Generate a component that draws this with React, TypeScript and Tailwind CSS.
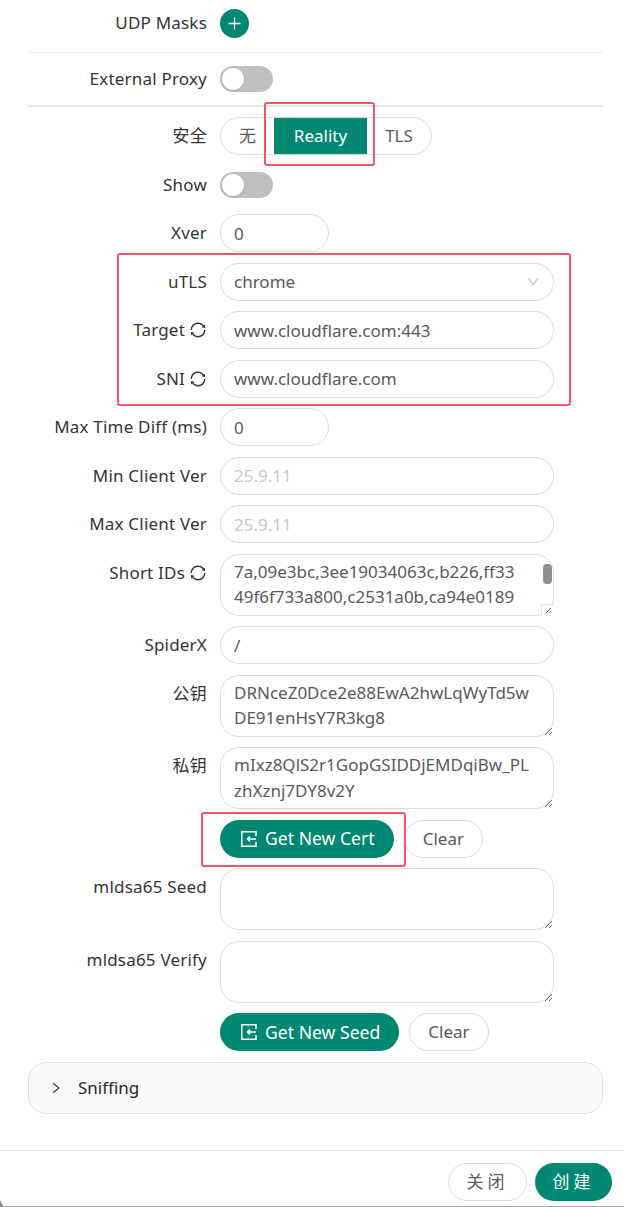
import type { ReactNode } from 'react';
import { AiOutlineDown, AiOutlinePlus, AiOutlineRight, AiOutlineSync } from 'react-icons/ai';

const FONT = '"Noto Sans", "Noto Sans CJK SC", sans-serif';

function Row({ label, sync, children }: { label: string; sync?: boolean; children: ReactNode }) {
  return (
    <div className="flex items-start">
      <div className="w-[207px] h-[38px] flex items-center justify-end gap-[4px] text-[#333333] tracking-[0.2px] whitespace-nowrap">
        <span>{label}</span>
        {sync && <AiOutlineSync size={18} className="text-[#333333]" />}
      </div>
      <div className="ml-[13px] w-[334px] flex items-center min-h-[38px]">{children}</div>
    </div>
  );
}

function Toggle() {
  return (
    <div className="w-[53px] h-[26px] rounded-full bg-[#bfbfbf] p-[2px]">
      <div className="w-[22px] h-[22px] rounded-full bg-white shadow" />
    </div>
  );
}

function TextInput({ value, placeholder, short }: { value?: string; placeholder?: string; short?: boolean }) {
  return (
    <input
      readOnly
      value={value ?? ''}
      placeholder={placeholder}
      className={`${short ? 'w-[109px]' : 'w-full'} h-[38px] px-[13px] rounded-[19px] border border-[#dcdcdc] bg-white text-[#595959] outline-none placeholder:text-[#c8c8c8]`}
    />
  );
}

function Area({ value, scroll }: { value?: string; scroll?: boolean }) {
  return (
    <div className="relative w-full">
      <textarea
        readOnly
        value={value ?? ''}
        className={`block w-full h-[62px] pl-[13px] ${scroll ? 'pr-[30px]' : 'pr-[17px]'} pt-[4px] pb-[5px] rounded-[19px] border border-[#dcdcdc] bg-white text-[#595959] leading-[25.5px] outline-none resize-y overflow-hidden break-all`}
      />
      {scroll && (
        <>
          <div className="absolute right-[2px] top-[10px] w-[9px] h-[20px] rounded-[4px] bg-[#8f8f8f]" />
          <div className="absolute right-0 bottom-0 w-[13px] h-[12px] bg-white border-l border-t border-[#e4e4e4] flex items-center justify-center">
            <svg width="7" height="7" viewBox="0 0 7 7" fill="none" stroke="#777777" strokeWidth="1">
              <path d="M1 6 6 1M4 6 6 4" />
            </svg>
          </div>
        </>
      )}
    </div>
  );
}

function ImportIcon() {
  return (
    <svg width="18" height="18" viewBox="0 0 18 18" fill="none" stroke="currentColor" strokeWidth="1.5">
      <path d="M16 6V1.75H1.75v14.5H16V12" />
      <path d="M16 9H7.5M10 6.5 7.5 9l2.5 2.5" />
    </svg>
  );
}

function CertButtons({ label }: { label: string }) {
  return (
    <div className="flex items-center gap-[10px]">
      <button className="h-[38px] pl-[20px] pr-[19px] rounded-full bg-[#008771] text-white text-[17.6px] flex items-center gap-[7px] whitespace-nowrap">
        <ImportIcon />
        {label}
      </button>
      <button className="h-[38px] px-[18px] rounded-full border border-[#dcdcdc] bg-white text-[#595959]">Clear</button>
    </div>
  );
}

export default function App() {
  return (
    <div
      className="relative w-[624px] h-[1207px] overflow-hidden bg-white text-[17px] flex flex-col"
      style={{ fontFamily: FONT }}
    >
      <div className="pl-[28px] pr-[21px] pt-[4px] flex flex-col">
        <div className="-ml-[28px]">
          <Row label="UDP Masks">
            <button className="w-[29px] h-[29px] rounded-full bg-[#008771] text-white flex items-center justify-center">
              <AiOutlinePlus size={17} />
            </button>
          </Row>
        </div>
        <div className="h-px bg-[#eeeeee] mt-[10px] mb-[7px]" />
        <div className="-ml-[28px]">
          <Row label="External Proxy">
            <Toggle />
          </Row>
        </div>
        <div className="h-[2px] bg-[#e6e6e6] mt-[7px] mb-[10px]" />

        <div className="-ml-[28px] flex flex-col gap-[10.5px]">
          <Row label="安全">
            <div className="flex h-[38px] items-stretch rounded-full border border-[#dcdcdc] text-[#595959]">
              <span className="w-[53px] flex items-center justify-center">无</span>
              <span className="w-[93px] flex items-center justify-center bg-[#008771] text-white">Reality</span>
              <span className="w-[64px] flex items-center justify-center">TLS</span>
            </div>
          </Row>
          <Row label="Show">
            <Toggle />
          </Row>
          <Row label="Xver">
            <TextInput value="0" short />
          </Row>
          <Row label="uTLS">
            <div className="w-full h-[38px] px-[13px] rounded-[19px] border border-[#dcdcdc] bg-white text-[#595959] flex items-center justify-between">
              chrome
              <AiOutlineDown size={14} className="text-[#bdbdbd]" />
            </div>
          </Row>
          <Row label="Target" sync>
            <TextInput value="www.cloudflare.com:443" />
          </Row>
          <Row label="SNI" sync>
            <TextInput value="www.cloudflare.com" />
          </Row>
          <Row label="Max Time Diff (ms)">
            <TextInput value="0" short />
          </Row>
          <Row label="Min Client Ver">
            <TextInput placeholder="25.9.11" />
          </Row>
          <Row label="Max Client Ver">
            <TextInput placeholder="25.9.11" />
          </Row>
          <Row label="Short IDs" sync>
            <Area value="7a,09e3bc,3ee19034063c,b226,ff3349f6f733a800,c2531a0b,ca94e0189" scroll />
          </Row>
          <Row label="SpiderX">
            <TextInput value="/" />
          </Row>
          <Row label="公钥">
            <Area value="DRNceZ0Dce2e88EwA2hwLqWyTd5wDE91enHsY7R3kg8" />
          </Row>
          <Row label="私钥">
            <Area value="mIxz8QlS2r1GopGSIDDjEMDqiBw_PLzhXznj7DY8v2Y" />
          </Row>
          <Row label="">
            <CertButtons label="Get New Cert" />
          </Row>
          <Row label="mldsa65 Seed">
            <Area />
          </Row>
          <Row label="mldsa65 Verify">
            <Area />
          </Row>
          <Row label="">
            <CertButtons label="Get New Seed" />
          </Row>
        </div>

        <div className="mt-[11px] h-[52px] rounded-[18px] border border-[#e0e0e0] bg-[#fafafa] flex items-center pl-[20px] gap-[15px] text-[#262626]">
          <AiOutlineRight size={14} />
          Sniffing
        </div>
      </div>

      <div className="mt-auto border-t border-b border-t-[#e8e8e8] border-b-[#ababab] h-[57px] pt-[12px] pr-[12px] flex justify-end gap-[8px]">
        <button className="w-[79px] h-[38px] rounded-full border border-[#dcdcdc] bg-white text-[#595959] tracking-[4px]">关闭</button>
        <button className="w-[77px] h-[38px] rounded-full bg-[#008771] text-white tracking-[4px]">创建</button>
      </div>

      {/* window corner at the bottom left */}
      <svg className="absolute left-0 bottom-0" width="4" height="7" viewBox="0 0 4 7" fill="#8a8a8a">
        <path d="M0 0 3.5 7H0Z" />
      </svg>

      {/* annotation frames drawn over the form */}
      <div className="absolute left-[264px] top-[102px] w-[111px] h-[64px] rounded-[3px] border-2 border-[#f0566b]" />
      <div className="absolute left-[117px] top-[253px] w-[454px] h-[153px] rounded-[3px] border-2 border-[#f0566b]" />
      <div className="absolute left-[201px] top-[812px] w-[205px] h-[55px] rounded-[3px] border-2 border-[#f0566b]" />
    </div>
  );
}
